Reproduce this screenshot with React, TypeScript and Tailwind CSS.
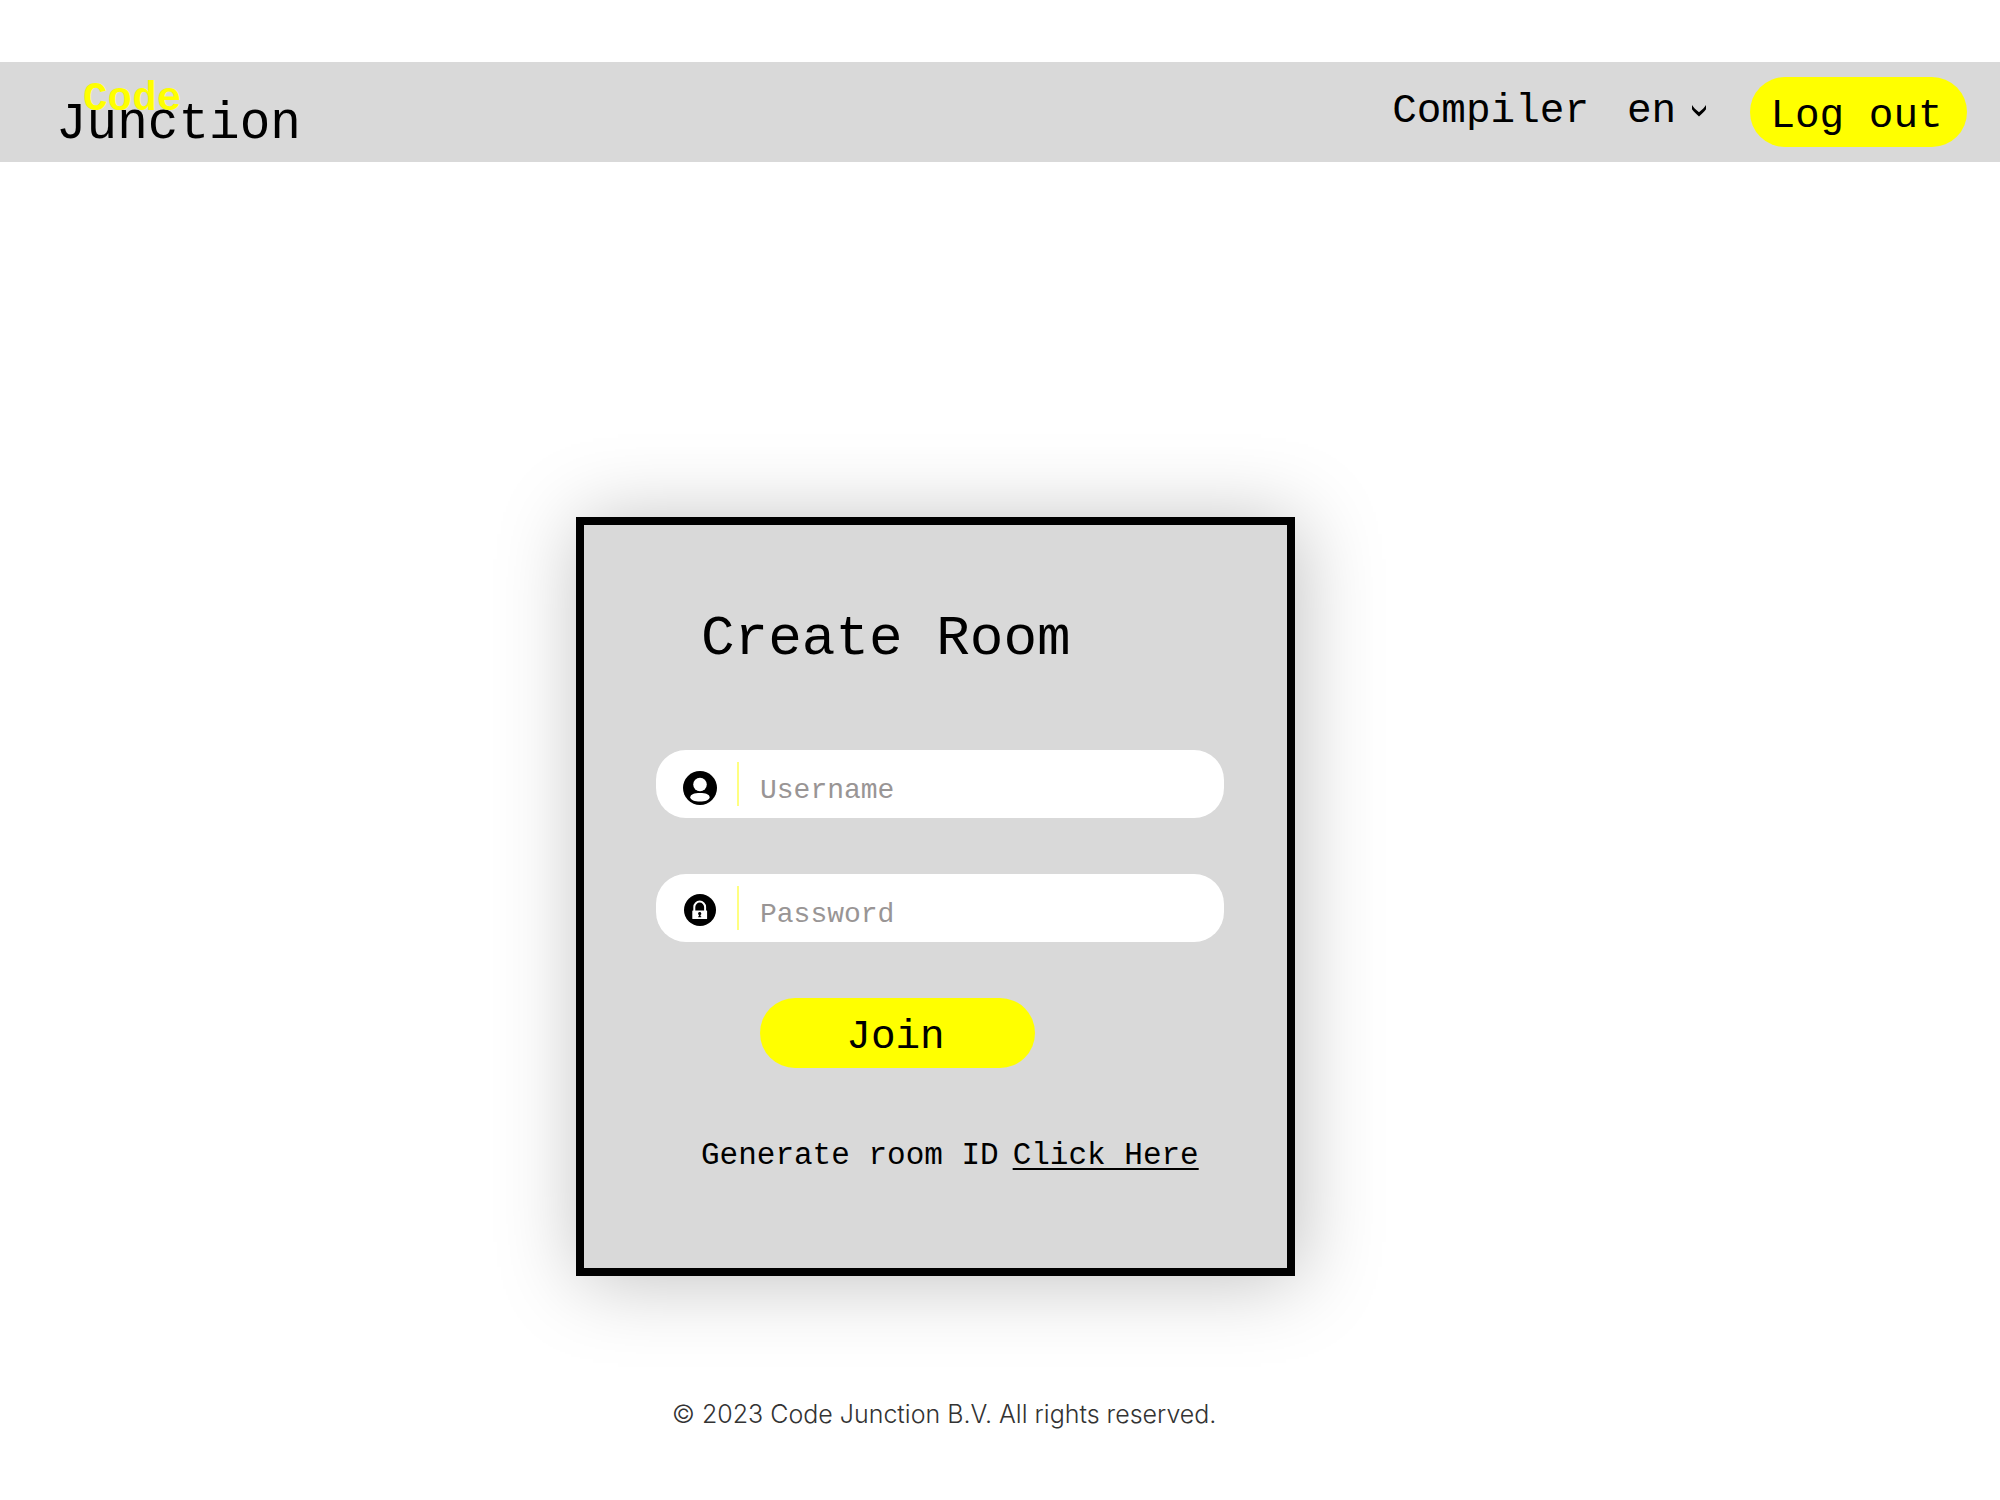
import type { ReactNode } from "react";

function UserIcon() {
  return (
    <svg viewBox="0 0 34 34" className="mt-1 size-[34px]" aria-hidden="true">
      <circle cx="17" cy="17" r="17" fill="#000" />
      <circle cx="17" cy="13.5" r="6.8" fill="#fff" />
      <path d="M7.3 26.2C7.3 23.4 11.4 22 17 22s9.6 1.400 9.600 4.200S22.200 30.600 17 30.600 7.300 29 7.300 26.200Z" fill="#fff" />
    </svg>
  );
}

function LockIcon() {
  return (
    <svg viewBox="0 0 32 32" className="size-8" aria-hidden="true">
      <circle cx="16" cy="16" r="16" fill="#000" />
      <path d="M10.300 17v-4a5.400 5.400 0 0 1 10.800 0v4" fill="none" stroke="#fff" strokeWidth="2" />
      <rect x="8.300" y="16.500" width="14.800" height="8.500" rx="0.600" fill="#fff" />
      <path d="M15.700 18a1.600 1.600 0 0 1 .8 3v1.300h.7v1H14.200v-1h.7V21a1.600 1.600 0 0 1 .8-3Z" fill="#000" />
    </svg>
  );
}

function Field({ id, type, label, icon }: { id: string; type: string; label: string; icon: ReactNode }) {
  return (
    <div className="flex h-[68px] items-center rounded-[30px] bg-white pr-6 pl-[26px]">
      <label htmlFor={id} aria-label={label} className="flex w-9 justify-center pt-1">
        {icon}
      </label>
      <span className="ml-[19px] h-11 w-0.5 bg-[#ffff80]" />
      <input
        id={id}
        type={type}
        placeholder={label}
        className="ml-[21px] h-12 min-w-0 flex-1 bg-transparent pt-3 text-[28px] leading-8 text-black outline-none placeholder:text-[#999595] placeholder:opacity-100"
      />
    </div>
  );
}

export default function App() {
  return (
    <div className="min-h-screen bg-white pt-[62px] font-['Liberation_Mono',monospace] text-black">
      <header className="flex h-[100px] items-center justify-between bg-[#d9d9d9] pr-[33px] pl-14">
        <a href="#" className="flex flex-col pt-0.5">
          <span className="relative z-10 pl-[27px] text-[41px] leading-6 font-bold text-[#ffff00]">Code</span>
          <span className="text-[51px] leading-7">Junction</span>
        </a>
        <nav className="flex items-center text-[41px] leading-[48px]">
          <div className="flex items-center pb-0.5">
            <a href="#">Compiler</a>
            <div className="ml-[38px] flex items-center gap-4">
              <select
                aria-label="Language"
                className="h-12 w-[49px] cursor-pointer appearance-none bg-transparent outline-none"
                defaultValue="en"
              >
                <option value="en">en</option>
              </select>
              <svg viewBox="0 0 14 12" className="h-3 w-3.5" aria-hidden="true">
                <path d="M0 0C1 1.800 3.800 4.800 7 7.300C10.200 4.800 13 1.800 14 0V4.200C12 7 9.500 9.300 7 11.500C4.500 9.300 2 7 0 4.200Z" fill="#000" />
              </svg>
            </div>
          </div>
          <button type="button" className="ml-11 h-[70px] w-[217px] rounded-[35px] bg-[#ffff00] pt-2 pr-1">
            Log out
          </button>
        </nav>
      </header>

      <main className="mt-[355px] pl-[28.8%]">
        <form
          className="w-full max-w-[719px] border-8 border-black bg-[#d9d9d9] pt-[82px] pr-[63px] pb-[92px] pl-[72px] shadow-[4px_4px_76px_rgba(0,0,0,0.25)]"
          onSubmit={(e) => e.preventDefault()}
        >
          <h1 className="ml-[45px] text-[56px] leading-[64px]">Create Room</h1>
          <div className="mt-[79px] flex flex-col gap-14">
            <Field id="username" type="text" label="Username" icon={<UserIcon />} />
            <Field id="password" type="password" label="Password" icon={<LockIcon />} />
            <button type="submit" className="ml-[104px] h-[70px] w-[275px] rounded-[35px] bg-[#ffff00] pt-2 pr-1 text-[41px] leading-[48px]">
              Join
            </button>
          </div>
          <p className="mt-[68px] ml-[45px] flex gap-[14px] text-[31px] leading-10 whitespace-nowrap">
            <span>Generate room ID</span>
            <a href="#" className="underline decoration-2 underline-offset-4">Click Here</a>
          </p>
        </form>
      </main>

      <footer className="mt-[122px] pl-[33.6%] font-['Inter',sans-serif] text-[25px] leading-8 font-light text-[#333333]">
        © 2023 Code Junction B.V. All rights reserved.
      </footer>
    </div>
  );
}
